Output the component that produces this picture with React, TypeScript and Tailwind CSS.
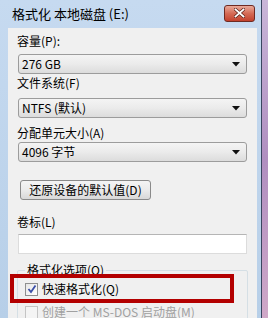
const font = "font-['Noto_Sans_CJK_SC','Liberation_Sans',sans-serif]";

const ComboBox = ({ value }: { value: string }) => {
    return (
        <div className="flex items-center justify-between h-[20px] mx-[10px] px-[3px] rounded-[3px] border border-[#9c9c9c] bg-gradient-to-b from-[#f4f4f4] via-[#ebebeb] to-[#dcdcdc]">
            <span className="text-[12px] leading-4 text-black">{value}</span>
            <svg width="8" height="5" viewBox="0 0 8 5" className="mr-[3px]">
                <path d="M0 0 H8 L4 4.5 Z" fill="#111" />
            </svg>
        </div>
    );
}

const Label = ({ text, className }: { text: string, className: string }) => {
    return (
        <div className={`text-[12px] leading-4 text-black pl-[9px] ${className}`}>{text}</div>
    );
}

export default function App() {
    return (
        <div className={`relative w-[268px] h-[318px] flex overflow-hidden bg-[#bed4ec] ${font}`}>
            <div className="w-[261px] h-[318px] flex flex-col bg-gradient-to-b from-[#c6daf0] to-[#b7cfe8]">
                {/* title bar */}
                <div className="h-[28px] shrink-0 flex items-center justify-between pl-[12px] pr-[6px]">
                    <span className="text-[13px] text-black leading-4">格式化 本地磁盘 (E:)</span>
                    <div className="w-[31px] h-[17px] mt-[-2px] flex items-center justify-center rounded-[3px] border border-[#6e2a22] bg-gradient-to-b from-[#e9a999] via-[#d46a55] to-[#c3402c]">
                        <svg width="11" height="10" viewBox="0 0 11 10">
                            <path d="M1.5 1.5 L9.5 8.5 M9.5 1.5 L1.5 8.5" stroke="#5a2018" strokeWidth="3.2" strokeLinecap="square" />
                            <path d="M1.5 1.5 L9.5 8.5 M9.5 1.5 L1.5 8.5" stroke="#ffffff" strokeWidth="1.8" strokeLinecap="square" />
                        </svg>
                    </div>
                </div>

                {/* client area */}
                <div className="flex-1 min-h-0 overflow-hidden ml-[8px] mr-[4px] bg-[#f0f0f0] pt-[5px]">
                    <Label text="容量(P):" className="" />
                    <div className="mt-[5px]"><ComboBox value="276 GB" /></div>

                    <Label text="文件系统(F)" className="mt-[1px]" />
                    <div className="mt-[7px]"><ComboBox value="NTFS (默认)" /></div>

                    <Label text="分配单元大小(A)" className="mt-[7px]" />
                    <div className="mt-[1px]"><ComboBox value="4096 字节" /></div>

                    <div className="mt-[18px] ml-[12px] w-[131px] h-[20px] flex items-center justify-center rounded-[3px] border border-[#8a8a8a] bg-gradient-to-b from-[#f4f4f4] via-[#ebebeb] to-[#d8d8d8] text-[12px] leading-4 text-black">
                        还原设备的默认值(D)
                    </div>

                    <Label text="卷标(L)" className="mt-[14px]" />
                    <div className="mt-[4px] mx-[10px] h-[20px] bg-white border border-[#dcdcdc] border-t-[#b5b5b5]"></div>

                    {/* group box */}
                    <div className="relative mt-[16px] mx-[9px] h-[60px] border border-[#d5dfe5] rounded-[2px]">
                        <span className="absolute -top-[9px] left-[7px] px-[2px] bg-[#f0f0f0] text-[12px] leading-4 text-black">格式化选项(O)</span>
                        <div className="flex items-center gap-[4px] mt-[10px] ml-[7px]">
                            <div className="w-[13px] h-[13px] border border-[#8e8f8f] bg-gradient-to-br from-[#e6e6e6] to-white flex items-center justify-center">
                                <svg width="10" height="10" viewBox="0 0 10 10">
                                    <path d="M1.5 5 L4 8 L8.5 1.5" stroke="#3b4fa8" strokeWidth="1.8" fill="none" />
                                </svg>
                            </div>
                            <span className="text-[12px] leading-4 text-black">快速格式化(Q)</span>
                        </div>
                        <div className="flex items-center gap-[4px] mt-[7px] ml-[7px]">
                            <div className="w-[13px] h-[13px] border border-[#c4c4c4] bg-[#f4f4f4]"></div>
                            <span className="text-[12px] leading-4 text-[#a0a0a0]">创建一个 MS-DOS 启动盘(M)</span>
                        </div>
                    </div>
                </div>
            </div>

            {/* desktop strip */}
            <div className="flex-1 border-l border-[#3a4660] bg-gradient-to-b from-[#c9b6d8] via-[#b08fc0] to-[#d0a8c8]"></div>

            {/* annotation frame */}
            <div className="absolute left-[10px] top-[274px] w-[224px] h-[29px] border-[4px] border-[#b30000]"></div>
        </div>
    );
}
